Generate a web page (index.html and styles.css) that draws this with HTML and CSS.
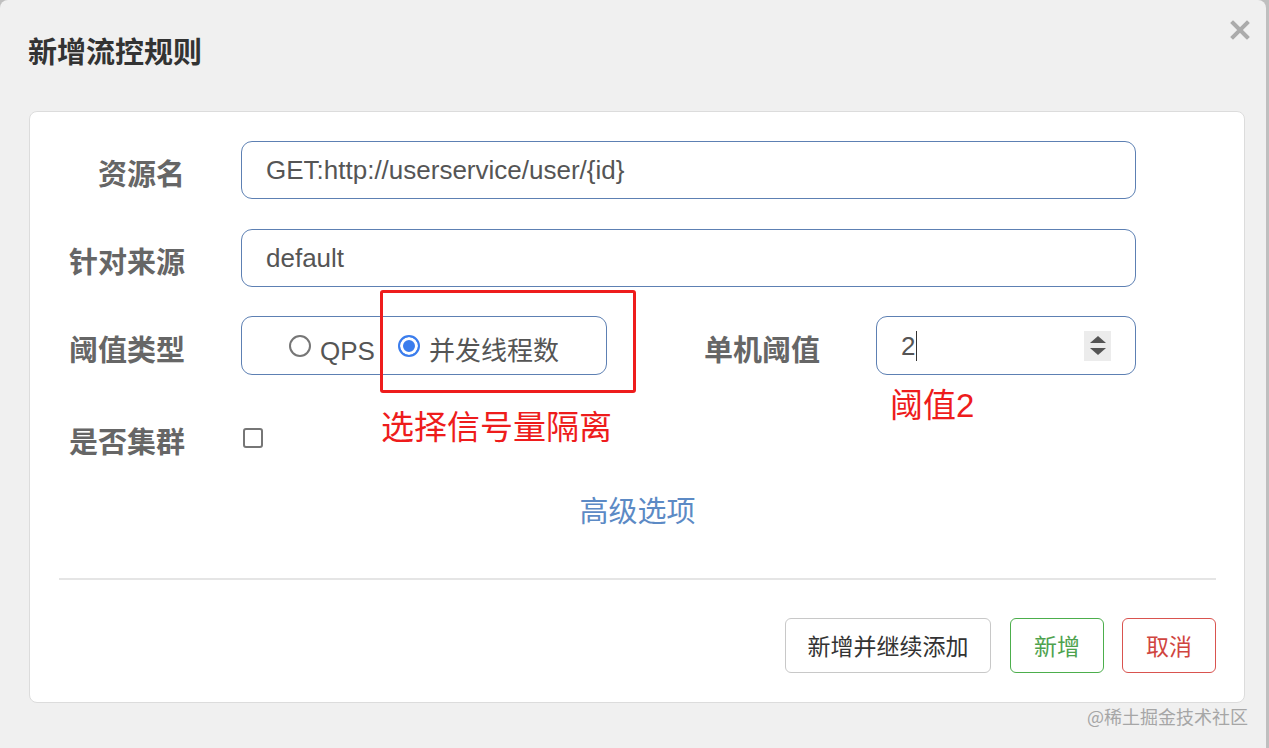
FILE: index.html
```html
<!DOCTYPE html>
<html lang="zh">
<head>
<meta charset="utf-8">
<title>新增流控规则</title>
<link rel="stylesheet" href="styles.css">
</head>
<body>
<div class="dialog">
  <div class="dialog-header">
    <h1 class="dialog-title">新增流控规则</h1>
    <button class="close-btn" aria-label="关闭">
      <svg width="20" height="20" viewBox="0 0 20 20"><path d="M3 3 L17 17 M17 3 L3 17" stroke="#ababab" stroke-width="4" stroke-linecap="square"/></svg>
    </button>
  </div>

  <div class="panel">
    <div class="form">
      <div class="row">
        <label class="label">资源名</label>
        <div class="input">GET:http://userservice/user/{id}</div>
      </div>
      <div class="row">
        <label class="label">针对来源</label>
        <div class="input">default</div>
      </div>
      <div class="row row-tall">
        <label class="label">阈值类型</label>
        <div class="split">
          <div class="radio-group">
            <span class="radio"><span class="radio-dot"></span><span class="radio-text">QPS</span></span>
            <span class="radio checked"><span class="radio-dot"></span><span class="radio-text">并发线程数</span></span>
          </div>
          <div class="sub-field">
            <label class="label">单机阈值</label>
            <div class="input number-input">
              <span class="num-value">2</span><span class="caret"></span>
              <span class="spinner"><span class="tri up"></span><span class="tri down"></span></span>
            </div>
          </div>
        </div>
      </div>
      <div class="row row-check">
        <label class="label">是否集群</label>
        <div><span class="checkbox"></span></div>
      </div>
    </div>

    <div class="advanced"><a class="adv-link">高级选项</a></div>

    <div class="divider"></div>

    <div class="actions">
      <button class="btn btn-default">新增并继续添加</button>
      <button class="btn btn-success">新增</button>
      <button class="btn btn-danger">取消</button>
    </div>

    <div class="note-box"></div>
    <div class="note note-radio">选择信号量隔离</div>
    <div class="note note-threshold">阈值2</div>
  </div>

  <div class="watermark">@稀土掘金技术社区</div>
</div>
</body>
</html>
```

FILE: styles.css
```css
* { box-sizing: border-box; }

html, body {
  margin: 0;
  padding: 0;
  background: #bfbfbf;
  font-family: "Liberation Sans", "Noto Sans CJK SC", sans-serif;
}

.dialog {
  position: relative;
  width: 1266px;
  height: 748px;
  background: #f0f0f0;
  border-top-left-radius: 8px;
  border-top-right-radius: 8px;
  overflow: hidden;
}

.dialog-header {
  display: flex;
  justify-content: space-between;
  align-items: flex-start;
  height: 70px;
  padding: 0 16px 0 28px;
}

.dialog-title {
  margin: 30px 0 0 0;
  font-size: 29px;
  line-height: 40px;
  font-weight: 700;
  color: #333;
  font-family: "Noto Sans CJK SC", sans-serif;
}

.close-btn {
  margin-top: 20px;
  width: 20px;
  height: 20px;
  padding: 0;
  border: none;
  background: none;
  display: flex;
}

.panel {
  position: relative;
  margin: 41px 0 0 29px;
  width: 1216px;
  background: #fff;
  border: 1px solid #dcdcdc;
  border-radius: 8px;
  padding: 29px 28px 29px 29px;
}

.form {
  display: flex;
  flex-direction: column;
}

.row {
  display: grid;
  grid-template-columns: 126px 895px;
  column-gap: 56px;
  align-items: center;
  height: 58px;
}
.row + .row { margin-top: 30px; }
.row-tall { height: 59px; margin-top: 29px !important; }
.row-check { margin-top: 34px !important; }

.label {
  text-align: right;
  font-family: "Noto Sans CJK SC", sans-serif;
  font-weight: 700;
  font-size: 29px;
  color: #666;
  white-space: nowrap;
  padding-top: 4px;
}

.input {
  height: 58px;
  border: 1px solid #5d80b3;
  border-radius: 11px;
  padding: 0 24px;
  display: flex;
  align-items: center;
  font-size: 26px;
  color: #555;
}

.split {
  display: flex;
  justify-content: space-between;
  align-items: center;
}

.radio-group {
  width: 366px;
  height: 59px;
  border: 1px solid #5d80b3;
  border-radius: 11px;
  display: flex;
  justify-content: center;
  align-items: center;
  gap: 23px;
}

.radio {
  display: flex;
  align-items: center;
  gap: 9px;
  font-size: 26px;
  color: #555;
}
.radio-text {
  font-family: "Liberation Sans", "Noto Sans CJK SC", sans-serif;
  line-height: 30px;
  padding-top: 10px;
}

.radio-dot {
  width: 22px;
  height: 22px;
  border: 2px solid #767676;
  border-radius: 50%;
  background: #fff;
  display: inline-block;
}
.radio.checked .radio-dot {
  border: 2px solid #3b7ded;
  background: #3b7ded;
  box-shadow: inset 0 0 0 3px #fff;
}

.sub-field {
  display: flex;
  align-items: center;
  gap: 56px;
}

.number-input {
  width: 260px;
  height: 59px;
  position: relative;
}
.num-value { line-height: 30px; }
.caret {
  width: 1px;
  height: 30px;
  background: #333;
  margin-left: 1px;
}
.spinner {
  margin-left: auto;
  width: 27px;
  height: 30px;
  background: #ececec;
  display: flex;
  flex-direction: column;
  align-items: center;
  justify-content: center;
  gap: 5px;
}
.tri {
  width: 0;
  height: 0;
  border-left: 8px solid transparent;
  border-right: 8px solid transparent;
}
.tri.up { border-bottom: 7px solid #555; }
.tri.down { border-top: 7px solid #555; }

.checkbox {
  display: block;
  margin-left: 2px;
  width: 20px;
  height: 20px;
  border: 2px solid #767676;
  border-radius: 3px;
  background: #fff;
}

.advanced {
  margin-top: 22px;
  text-align: center;
  line-height: 40px;
}
.adv-link {
  font-family: "Noto Sans CJK SC", sans-serif;
  font-size: 29px;
  color: #5c8ac5;
}

.divider {
  margin-top: 41px;
  border-top: 2px solid #e5e5e5;
}

.actions {
  margin-top: 38px;
  display: flex;
  justify-content: flex-end;
  gap: 19px;
}

.btn {
  height: 55px;
  padding: 0 20px;
  border-radius: 6px;
  background: #fff;
  font-family: "Noto Sans CJK SC", sans-serif;
  font-size: 23px;
  line-height: 1;
  white-space: nowrap;
}
.btn-default { border: 1px solid #c8c8c8; color: #333; width: 206px; }
.btn-success { border: 1px solid #4cae4c; color: #4ea24e; width: 94px; }
.btn-danger { border: 1px solid #d9534f; color: #d0453f; width: 94px; margin-left: -1px; }

.note-box {
  position: absolute;
  left: 350px;
  top: 178px;
  width: 256px;
  height: 103px;
  border: 3px solid #ee1c1c;
  border-radius: 3px;
}

.note {
  position: absolute;
  font-family: "Noto Sans CJK SC", sans-serif;
  font-size: 33px;
  line-height: 40px;
  color: #ee1c1c;
  white-space: nowrap;
}
.note-radio { left: 351px; top: 293px; }
.note-threshold { left: 860px; top: 274px; font-family: "Liberation Sans", "Noto Sans CJK SC", sans-serif; }

.watermark {
  position: absolute;
  right: 18px;
  top: 704px;
  font-family: "Noto Sans CJK SC", sans-serif;
  font-size: 18px;
  line-height: 24px;
  color: #a6a6a6;
}
```
